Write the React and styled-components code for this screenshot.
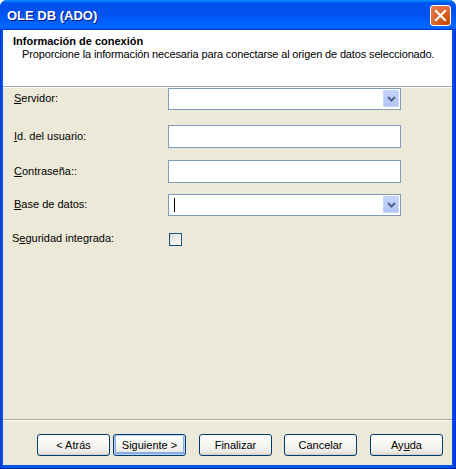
import React from 'react';
import styled, { createGlobalStyle } from 'styled-components';

const GlobalStyle = createGlobalStyle`
  html, body { margin: 0; padding: 0; background: #fff; }
  body { font-family: "Liberation Sans", Arial, sans-serif; font-size: 11px; color: #000; }
`;

const fields = [
  { label: 'Servidor:', key: 'S', rest: 'ervidor:', kind: 'combo' },
  { label: 'Id. del usuario:', key: 'I', rest: 'd. del usuario:', kind: 'text' },
  { label: 'Contraseña::', key: 'C', rest: 'ontraseña::', kind: 'text' },
  { label: 'Base de datos:', key: 'B', rest: 'ase de datos:', kind: 'combo', caret: true },
];

export default function App() {
  return (
    <>
      <GlobalStyle />
      <StyWindow>
        <StyTitleBar>
          <StyTitle>OLE DB (ADO)</StyTitle>
          <StyClose aria-label="Cerrar">
            <svg width="13" height="13" viewBox="0 0 13 13">
              <path d="M2 2 L11 11 M11 2 L2 11" stroke="#fff" strokeWidth="2.2" strokeLinecap="square" />
            </svg>
          </StyClose>
        </StyTitleBar>
        <StyClient>
          <StyHeader>
            <StyHeadTitle>Información de conexión</StyHeadTitle>
            <StyHeadText>Proporcione la información necesaria para conectarse al origen de datos seleccionado.</StyHeadText>
          </StyHeader>
          <StyBody>
            {fields.map((f) => (
              <StyRow key={f.label} $tall={f.kind === 'text'}>
                <StyLabel><u>{f.key}</u>{f.rest}</StyLabel>
                <StyField>
                  {f.caret && <StyCaret />}
                  {f.kind === 'combo' && (
                    <StyDrop>
                      <svg width="9" height="6" viewBox="0 0 9 6">
                        <path d="M1 1 L4.5 4.5 L8 1" fill="none" stroke="#4D6185" strokeWidth="2" />
                      </svg>
                    </StyDrop>
                  )}
                </StyField>
              </StyRow>
            ))}
            <StyCheckRow>
              <StyCheckLabel>S<u>e</u>guridad integrada:</StyCheckLabel>
              <StyCheck />
            </StyCheckRow>
          </StyBody>
          <StyFooter>
            <StyButton $w={73}>&lt; Atrás</StyButton>
            <StyButton $w={73} $gap={3} $default>Siguiente &gt;</StyButton>
            <StyButton $w={73} $gap={13}>Finalizar</StyButton>
            <StyButton $w={73} $gap={12}>Cancelar</StyButton>
            <StyButton $w={73} $gap={13}>Ay<u>u</u>da</StyButton>
          </StyFooter>
        </StyClient>
      </StyWindow>
    </>
  );
}

// Styled Components

const StyWindow = styled.div`
  width: 456px;
  height: 469px;
  box-sizing: border-box;
  display: flex;
  flex-direction: column;
  background: linear-gradient(90deg, #0831D9 0px, #0055EA 2px, #0055EA 452px, #0831D9 456px);
  border-bottom: 1px solid #001EA0;
  border-radius: 7px 7px 0 0;
  overflow: hidden;
`;

const StyTitleBar = styled.div`
  height: 30px;
  flex: none;
  display: flex;
  align-items: center;
  justify-content: space-between;
  padding: 0 5px 0 7px;
  box-sizing: border-box;
  background: linear-gradient(180deg, #0997FF 0%, #0053EE 10%, #0050EE 40%, #0066FF 86%, #0066FF 92%, #005BFF 95%, #003DD7 97%, #003DD7 100%);
`;

const StyTitle = styled.div`
  font-family: "Liberation Sans", Arial, sans-serif;
  font-weight: bold;
  font-size: 13px;
  color: #fff;
  text-shadow: 1px 1px 0 #0A1883;
  margin-top: 1px;
`;

const StyClose = styled.div`
  width: 21px;
  height: 21px;
  box-sizing: border-box;
  border: 1px solid #fff;
  border-radius: 3px;
  background: radial-gradient(circle at 80% 90%, #CC4600 0%, #DC6527 50%, #E3805A 100%);
  display: flex;
  align-items: center;
  justify-content: center;
  margin-top: 1px;
`;

const StyClient = styled.div`
  flex: 1;
  margin: 0 4px 3px 3px;
  background: #ECE9D8;
  display: flex;
  flex-direction: column;
`;

const StyHeader = styled.div`
  height: 57px;
  flex: none;
  background: #fff;
  border-bottom: 1px solid #ACA899;
  box-shadow: 0 1px 0 #fff;
  box-sizing: border-box;
  padding: 5px 0 0 10px;
`;

const StyHeadTitle = styled.div`
  font-weight: bold;
  line-height: 13px;
`;

const StyHeadText = styled.div`
  padding-left: 9px;
  line-height: 13px;
  letter-spacing: -0.14px;
`;

const StyBody = styled.div`
  flex: 1;
  padding: 1px 0 0 0;
  display: flex;
  flex-direction: column;
`;

const StyRow = styled.div`
  display: grid;
  grid-template-columns: 165px 233px;
  align-items: center;
  height: ${(p) => (p.$tall ? '23px' : '22px')};
  margin-bottom: ${(p) => (p.$tall ? '12px' : '15px')};
  &:first-child { margin-bottom: 15px; }
  &:nth-child(3) { margin-bottom: 11px; }
`;

const StyLabel = styled.div`
  padding-left: 11px;
  margin-top: -2px;
  u { text-decoration: underline; text-underline-offset: 1px; }
`;

const StyField = styled.div`
  position: relative;
  height: 100%;
  box-sizing: border-box;
  border: 1px solid #7F9DB9;
  background: #fff;
`;

const StyCaret = styled.div`
  position: absolute;
  left: 5px;
  top: 3px;
  width: 1px;
  height: 14px;
  background: #000;
`;

const StyDrop = styled.div`
  position: absolute;
  right: 1px;
  top: 1px;
  width: 16px;
  height: 17px;
  border-radius: 2px;
  background: linear-gradient(180deg, #C6D5FC 0%, #B8CBF8 60%, #AFC4F6 100%);
  box-shadow: inset 0 0 0 1px #C3D3FD;
  display: flex;
  align-items: center;
  justify-content: center;
`;

const StyCheckRow = styled.div`
  display: grid;
  grid-template-columns: 166px 13px;
  align-items: center;
  margin-top: 1px;
  height: 14px;
`;

const StyCheckLabel = styled.div`
  padding-left: 9px;
  margin-top: -2px;
  u { text-decoration: underline; text-underline-offset: 1px; }
`;

const StyCheck = styled.div`
  width: 13px;
  height: 13px;
  box-sizing: border-box;
  border: 1px solid #1C5180;
  background: linear-gradient(135deg, #DCDCD7 0%, #FFFFFF 100%);
`;

const StyFooter = styled.div`
  flex: none;
  height: 46px;
  box-sizing: border-box;
  border-top: 1px solid #ACA899;
  box-shadow: inset 0 1px 0 #fff;
  display: flex;
  align-items: flex-start;
  padding: 14px 0 0 34px;
`;

const StyButton = styled.div`
  width: ${(p) => p.$w}px;
  height: 22px;
  margin-left: ${(p) => p.$gap || 0}px;
  box-sizing: border-box;
  border: 1px solid #003C74;
  border-radius: 3px;
  background: linear-gradient(180deg, #FFFFFF 0%, #F7F7F4 40%, #ECEBE6 85%, #D6D0C5 100%);
  box-shadow: ${(p) => (p.$default ? 'inset 0 0 0 1px #B9D1FA, inset 0 -1px 0 2px #89ADE4' : 'none')};
  display: flex;
  align-items: center;
  justify-content: center;
  u { text-decoration: underline; }
`;
